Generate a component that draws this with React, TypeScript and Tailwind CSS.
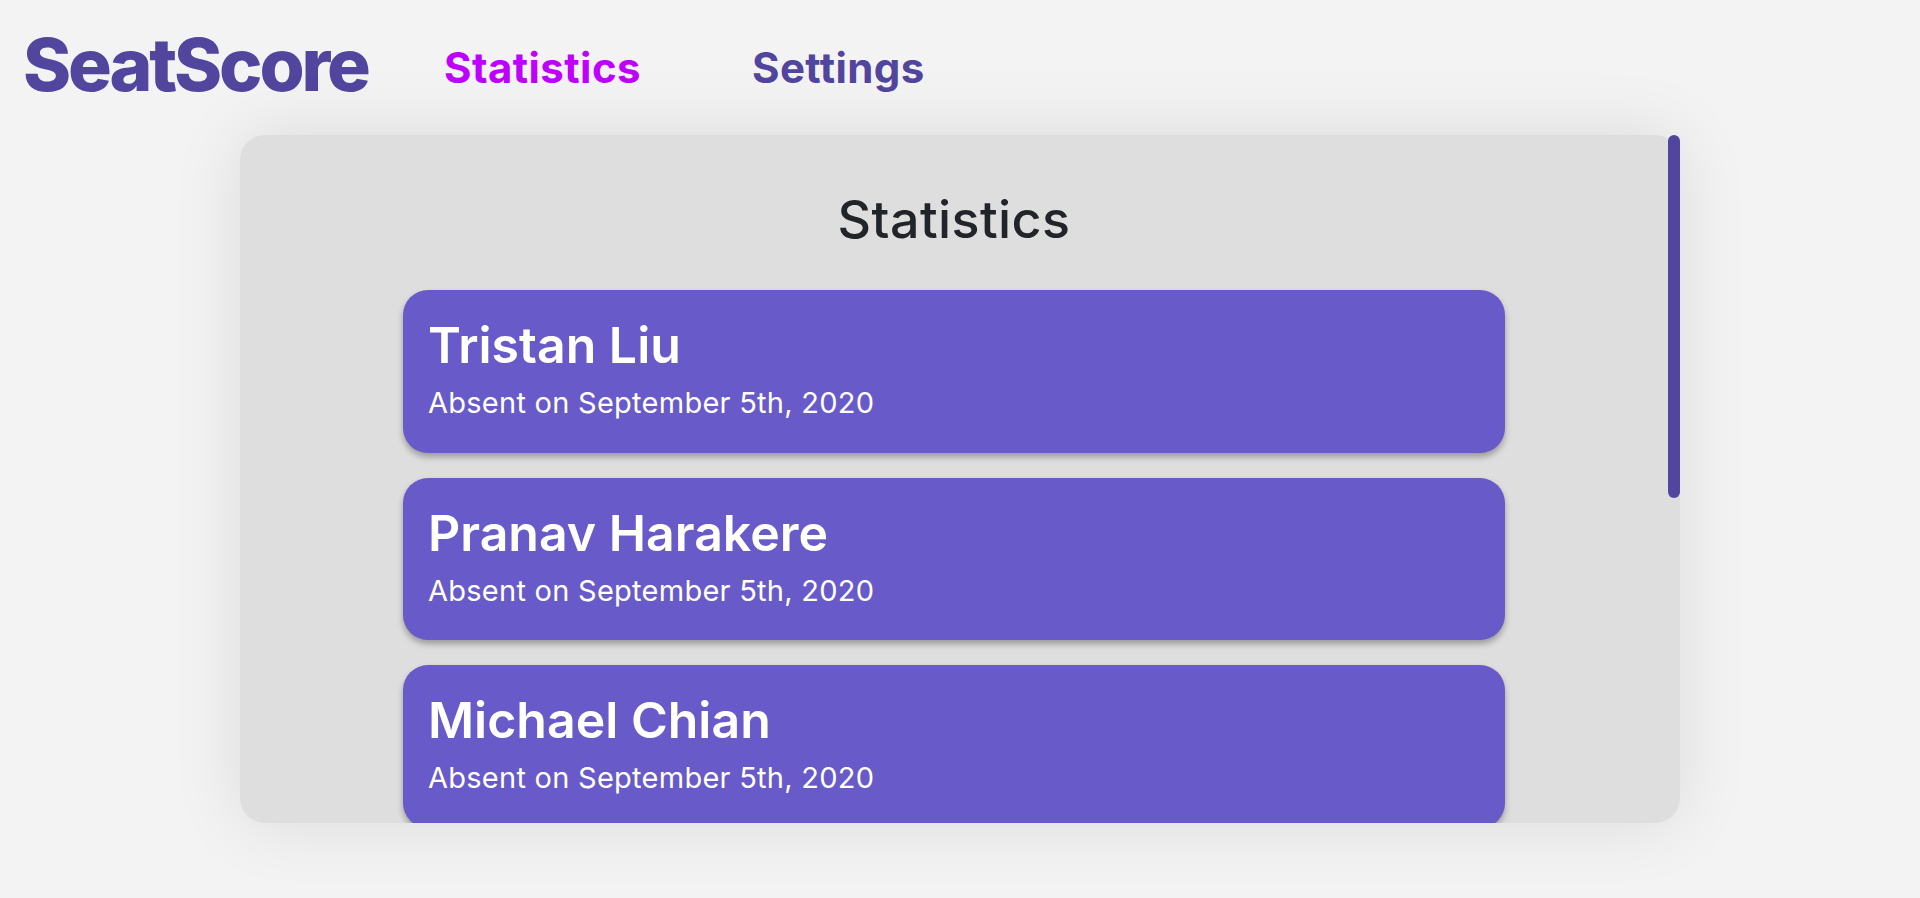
const students = ['Tristan Liu', 'Pranav Harakere', 'Michael Chian'];

export default function App() {
  return (
    <div className="h-[898px] overflow-hidden bg-[#f3f3f3] font-['Inter',sans-serif]">
      {/* Navbar */}
      <nav className="flex h-[135px] items-start pl-[23px]">
        <div className="mt-[20px] w-[421px] text-[73px] leading-[90px] font-extrabold tracking-[-0.043em] text-[#51459e]">SeatScore</div>
        <a className="mt-[43px] w-[308px] text-[42px] leading-[50px] font-bold tracking-[0.01em] text-[#bf00ff]">Statistics</a>
        <a className="mt-[43px] text-[42px] leading-[50px] font-bold tracking-[0.01em] text-[#51459e]">Settings</a>
      </nav>

      {/* Statistics panel */}
      <div className="relative mx-auto w-[1440px]">
        <div className="h-[688px] overflow-hidden rounded-[25px] bg-[#dedede] pr-3 shadow-[0_0_70px_rgba(0,0,0,0.1)]">
          <h1 className="pt-[57px] pb-[42px] text-center text-[52px] leading-[56px] font-medium tracking-[0.008em] text-[#212529]">Statistics</h1>
          <div className="mx-auto flex w-[1102px] flex-col gap-[25px]">
            {students.map((name) => (
              <div key={name} className="h-[162.5px] shrink-0 rounded-[25px] bg-[#685ac8] px-[25px] pt-[26px] text-white shadow-[0_4px_6px_rgba(0,0,0,0.3)]">
                <div className="text-[50px] leading-[58px] font-semibold">{name}</div>
                <div className="mt-[11px] text-[29px] leading-[36px] tracking-[0.009em]">Absent on September 5th, 2020</div>
              </div>
            ))}
          </div>
        </div>
        {/* Scrollbar thumb */}
        <div className="absolute top-0 right-0 h-[363px] w-3 rounded-md bg-[#51459e]" />
      </div>
    </div>
  );
}
